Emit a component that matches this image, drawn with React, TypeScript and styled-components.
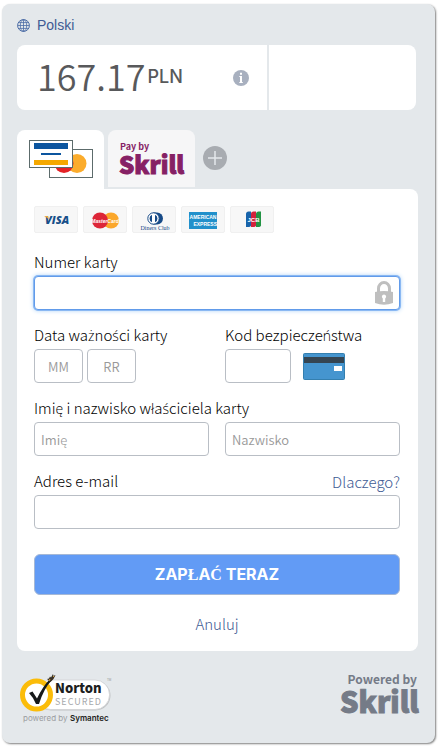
import React from "react";
import styled, { createGlobalStyle } from "styled-components";

const sans = '"Noto Sans CJK JP", "Noto Sans", sans-serif';

const GlobalStyle = createGlobalStyle`
  *, *::before, *::after { box-sizing: border-box; }
  body { margin: 0; background: #fff; font-family: ${sans}; color: #333; }
  button, input { font-family: inherit; }
  svg { display: block; overflow: visible; }
  a { color: #405b94; text-decoration: none; }
`;

const Panel = styled.main`
  margin: 4px 4px 4px 2px;
  padding: 12px 17px 19px 15px;
  background: #e4e8eb;
  border-radius: 8px;
  box-shadow: 1px 1px 2px rgba(0, 0, 0, 0.5);
`;

const LanguageLink = styled.a`
  display: flex;
  align-items: center;
  gap: 7px;
  height: 19px;
  font: 14px/19px "Liberation Sans", Arial, sans-serif;
`;

const AmountBar = styled.section`
  display: grid;
  grid-template-columns: 250px 1fr;
  gap: 2px;
  height: 65px;
  margin: 10px 2px 20px 0;
  border-radius: 8px;
  overflow: hidden;
`;

const AmountCell = styled.div`
  display: flex;
  align-items: center;
  justify-content: space-between;
  padding: 0 18px 0 20px;
  background: #fff;
`;

const Amount = styled.div`
  display: flex;
  align-items: center;
  padding-bottom: 6px;
  color: #58595b;
  font-size: 36px;
  font-weight: 350;
  line-height: 54px;
`;

const Currency = styled.span`
  margin: 4px 0 0 2px;
  font: 500 18px/20px Inter, sans-serif;
`;

const PlainButton = styled.button`
  display: block;
  padding: 0;
  border: 0;
  background: none;
  cursor: pointer;
`;

const Tabs = styled.div`
  display: flex;
  align-items: flex-start;
  gap: 4px;
  height: 59px;
`;

const Tab = styled.button<{ $active?: boolean }>`
  display: flex;
  justify-content: center;
  width: 87px;
  height: ${(p) => (p.$active ? 59 : 57)}px;
  padding: 10px 0 0;
  border: 0;
  border-radius: 8px 8px 0 0;
  background: ${(p) => (p.$active ? "#fff" : "#f6f6f7")};
  cursor: pointer;
`;

const AddTab = styled(PlainButton)`
  margin: 16px 0 0 4px;
`;

const Form = styled.form`
  padding: 17px 18px 15px 17px;
  background: #fff;
  border-radius: 0 8px 8px 8px;
`;

const Brands = styled.ul`
  display: flex;
  gap: 5px;
  margin: 0 0 17px;
  padding: 0;
  list-style: none;
`;

const Brand = styled.li`
  width: 44px;
  height: 27px;
  border: 1px solid #f0f0f0;
  border-radius: 2px;
  background: #f7f7f7;
`;

const Columns = styled.div`
  display: grid;
  grid-template-columns: 1fr 1fr;
  gap: 16px;
`;

const Field = styled.div`
  margin-bottom: 13px;
`;

const LabelRow = styled.div`
  display: flex;
  justify-content: space-between;
  height: 26px;
  font-size: 15px;
  line-height: 24px;
  white-space: nowrap;
`;

const Label = styled.label`
  font-weight: 300;
  color: #000;
`;

const AccentedLetter = styled.span`
  font-family: "Open Sans", "Noto Sans", sans-serif;
  font-size: 14px;
`;

const HelpLink = styled.a`
  font-weight: 300;
  line-height: 26px;
`;

const Inputs = styled.div`
  display: flex;
  align-items: center;
  gap: 4px;
`;

const TextInput = styled.input<{ $width?: number; $centered?: boolean; $highlighted?: boolean }>`
  display: block;
  width: ${(p) => (p.$width ? `${p.$width}px` : "100%")};
  min-width: 0;
  height: 34px;
  padding: 0 6px;
  border: 1px solid ${(p) => (p.$highlighted ? "#619bea" : "#b9bec5")};
  border-radius: 4px;
  outline: 0;
  background: #fff;
  box-shadow: ${(p) => (p.$highlighted ? "0 0 0 1px #8ab8f3, 0 0 5px #8fc3f5" : "none")};
  color: #333;
  font-size: 13px;
  font-weight: 350;
  text-align: ${(p) => (p.$centered ? "center" : "left")};
  &::placeholder { color: #999; opacity: 1; }
`;

const WithIcon = styled.div`
  position: relative;
  svg { position: absolute; right: 7px; top: 5px; pointer-events: none; }
`;

const CardBack = styled.svg`
  margin-left: 8px;
`;

const PayButton = styled.button`
  display: block;
  width: 100%;
  height: 41px;
  margin-top: 25px;
  padding: 0;
  border: 1px solid #a5b8d6;
  border-radius: 6px;
  background: #629bf5;
  color: #fff;
  font: 700 16px/20px Inter, sans-serif;
  cursor: pointer;
`;

const SerifLetter = styled.span`
  font-family: "Liberation Serif", serif;
`;

const Cancel = styled.a`
  display: block;
  margin-top: 17px;
  font-size: 15px;
  font-weight: 300;
  line-height: 24px;
  text-align: center;
`;

const Footer = styled.footer`
  display: flex;
  justify-content: space-between;
  align-items: flex-start;
  padding: 21px 0 0 3px;
`;

const Accented = ({ children }: { children: string }) => (
  <>
    {children.split(/([żśńćęł])/).map((part, i) =>
      i % 2 ? <AccentedLetter key={i}>{part}</AccentedLetter> : part
    )}
  </>
);

const Globe = () => (
  <svg width="13" height="13" viewBox="0 0 13 13" fill="none" stroke="#4b6ca6" aria-hidden="true">
    <circle cx="6.500" cy="6.500" r="5.900" strokeWidth="1" />
    <ellipse cx="6.500" cy="6.500" rx="3.200" ry="5.900" strokeWidth=".8" />
    <path d="M6.500 .6v11.800M.6 6.500h11.800M1.500 3.600h10M1.500 9.400h10" strokeWidth=".8" />
  </svg>
);

const InfoIcon = () => (
  <svg width="16" height="16" viewBox="0 0 16 16" aria-hidden="true">
    <circle cx="8" cy="8" r="8" fill="#a8b0bf" />
    <path d="M7 2.700h2v2H7zM6.300 6H9v6h.800v1H6.300v-1H7V7h-.700z" fill="#fff" />
  </svg>
);

const CardsIcon = () => (
  <svg width="64" height="40" viewBox="0 0 64 40" aria-hidden="true">
    <rect x="20.500" y="9.500" width="43" height="28" fill="#fff" stroke="#5c6b6b" />
    <circle cx="48" cy="23.500" r="9.500" fill="#fbac2c" />
    <circle cx="35" cy="23.500" r="9.500" fill="#e32227" />
    <rect x=".5" y=".5" width="43" height="27" fill="#fff" stroke="#5c6b6b" />
    <path d="M5 3h34v6H5zM12 13h20v2H12z" fill="#0b559f" />
    <path d="M5 20h34v5H5z" fill="#f5a800" />
  </svg>
);

const SkrillTabLogo = () => (
  <svg width="66" height="42" viewBox="0 0 66 42" role="img" aria-label="Pay by Skrill" fill="#862165">
    <text x="1" y="10" fontSize="9" fontWeight="700" fontFamily={sans}>Pay by</text>
    <text x="0" y="34" fontSize="24" fontWeight="900" fontFamily={sans} stroke="#862165" strokeWidth="1">Skrill</text>
  </svg>
);

const PlusIcon = () => (
  <svg width="24" height="24" viewBox="0 0 24 24" aria-hidden="true">
    <circle cx="12" cy="12" r="12" fill="#a8acb1" />
    <path d="M12 5v14M5 12h14" stroke="#e4e8eb" strokeWidth="1.500" />
  </svg>
);

const Visa = () => (
  <svg width="42" height="25" viewBox="0 0 42 25" role="img" aria-label="Visa">
    <text x="10" y="17" fontSize="11" fontWeight="800" fontStyle="italic" fontFamily="Open Sans" fill="#174f89">VISA</text>
    <path d="M9 9h4l1 4c-1-2-3-3-5-4" fill="#e9a63b" />
  </svg>
);

const MasterCard = () => (
  <svg width="42" height="25" viewBox="0 0 42 25" role="img" aria-label="MasterCard">
    <circle cx="27" cy="13.500" r="8" fill="#fba72a" />
    <circle cx="16" cy="13.500" r="8" fill="#dd2638" />
    <text x="21" y="15.500" fontSize="5" fontWeight="700" fontStyle="italic" textAnchor="middle" fontFamily="Liberation Sans" fill="#fff">MasterCard</text>
  </svg>
);

const Diners = () => (
  <svg width="42" height="25" viewBox="0 0 42 25" role="img" aria-label="Diners Club">
    <path d="M20 5.500h4a6 6 0 0 1 0 12h-4z" fill="#174a87" />
    <circle cx="20.500" cy="11.500" r="5.700" fill="#fff" stroke="#174a87" />
    <path d="M19 7.800a4 4 0 0 0 0 7.400zM22 7.800a4 4 0 0 1 0 7.400z" fill="#174a87" />
    <text x="22" y="23" fontSize="6" textAnchor="middle" fontFamily="Liberation Serif" fill="#174a87">Diners Club</text>
  </svg>
);

const Amex = () => (
  <svg width="42" height="25" viewBox="0 0 42 25" role="img" aria-label="American Express">
    <rect x="7" y="5" width="28" height="17" fill="#2190cb" />
    <g fontFamily="Liberation Sans" fontWeight="700" fontSize="5" fill="#fff">
      <text x="21" y="12" textAnchor="middle">AMERICAN</text>
      <text x="35" y="18.500" textAnchor="end">EXPRESS</text>
    </g>
  </svg>
);

const Jcb = () => (
  <svg width="42" height="25" viewBox="0 0 42 25" role="img" aria-label="JCB">
    <path d="M18 4.500h2v13a2 2 0 0 1-2 2.500h-3V7a2.500 2.500 0 0 1 3-2.500" fill="#1864ab" />
    <path d="M23 4.500h2v13a2 2 0 0 1-2 2.500h-3V7a2.500 2.500 0 0 1 3-2.500" fill="#d3213b" />
    <path d="M28 4.500h2v13a2 2 0 0 1-2 2.500h-3V7a2.500 2.500 0 0 1 3-2.500" fill="#229344" />
    <text x="22.500" y="14.500" fontSize="6" fontWeight="700" textAnchor="middle" fontFamily="Liberation Sans" fill="#fff">JCB</text>
  </svg>
);

const LockIcon = () => (
  <svg width="18" height="24" viewBox="0 0 18 24" aria-hidden="true">
    <path d="M3.500 11V7.500a5.500 6 0 0 1 11 0V11" fill="none" stroke="#bfbfbf" strokeWidth="3" />
    <path d="M0 11q9-2 18 0v11q-9 3.500-18 0z" fill="#bfbfbf" />
    <path d="M9 13.500a2.200 2.200 0 0 1 1.200 4V21H7.800v-3.500a2.200 2.200 0 0 1 1.200-4" fill="#fff" />
  </svg>
);

const CardBackIcon = () => (
  <CardBack width="42" height="27" viewBox="0 0 42 27" aria-hidden="true">
    <rect x=".5" y=".5" width="41" height="26" rx="1" fill="#4595cf" stroke="#347faf" />
    <path d="M1 4h40v6H1z" fill="#354552" />
    <path d="M31 13h8v5h-8z" fill="#fff" />
  </CardBack>
);

const NortonLogo = () => (
  <svg width="93" height="52" viewBox="0 0 93 52" role="img" aria-label="Norton Secured, powered by Symantec">
    <rect x="16" y="8.500" width="74.500" height="30" rx="15" fill="#bfc2c4" />
    <rect x="16" y="8" width="73.500" height="29.500" rx="14.500" fill="#fff" stroke="#d0d2d4" strokeWidth=".8" />
    <circle cx="16.500" cy="23" r="14" fill="#fff" stroke="#fbbc09" strokeWidth="5" />
    <path d="M9 21l3.500-1.500 4.500 7Q23 14 30 7l4.500-3.500L32 8q-8 8-13 24h-3q-3-7-7-11" fill="#17191a" />
    <path d="M27 7l2-.5 1-2 1 1 2-3.500.5 2 2-1-2 4-3 3z" fill="#3a3226" />
    <path d="M29 9l1-2m3-2 1-1" stroke="#d9a13a" />
    <text x="35" y="21" fontSize="13" fontWeight="900" fontFamily={sans} fill="#1d1e20">Norton</text>
    <text x="35" y="33" fontSize="9" letterSpacing="1" fontFamily={sans} fill="#a7a9ac">SECURED</text>
    <text x="87" y="9" fontSize="3" fontFamily="Liberation Sans" fill="#999">TM</text>
    <g fontFamily="Inter" fontSize="8">
      <text x="3" y="49" fill="#9b9da0">powered by</text>
      <text x="50" y="49" fontWeight="600" fill="#1d1e20">Symantec</text>
    </g>
  </svg>
);

const PoweredLogo = () => (
  <svg width="78" height="46" viewBox="0 0 78 46" role="img" aria-label="Powered by Skrill" fill="#757b87">
    <text x="77" y="12" textAnchor="end" fontSize="12" fontWeight="700" fontFamily={sans}>Powered by</text>
    <text x="0" y="41" fontSize="29" fontWeight="900" fontFamily={sans} stroke="#757b87" strokeWidth="1">Skrill</text>
  </svg>
);

const brands = [Visa, MasterCard, Diners, Amex, Jcb];

export default function App() {
  return (
    <>
      <GlobalStyle />
      <Panel lang="pl">
        <LanguageLink href="#language"><Globe />Polski</LanguageLink>
        <AmountBar>
          <AmountCell>
            <Amount>167.17<Currency>PLN</Currency></Amount>
            <PlainButton type="button" aria-label="Informacje"><InfoIcon /></PlainButton>
          </AmountCell>
          <AmountCell />
        </AmountBar>
        <Tabs>
          <Tab type="button" $active aria-label="Karta"><CardsIcon /></Tab>
          <Tab type="button"><SkrillTabLogo /></Tab>
          <AddTab type="button" aria-label="Więcej metod"><PlusIcon /></AddTab>
        </Tabs>
        <Form onSubmit={(e) => e.preventDefault()}>
          <Brands>
            {brands.map((Logo, i) => <Brand key={i}><Logo /></Brand>)}
          </Brands>
          <Field>
            <LabelRow><Label htmlFor="number">Numer karty</Label></LabelRow>
            <WithIcon>
              <TextInput id="number" inputMode="numeric" $highlighted />
              <LockIcon />
            </WithIcon>
          </Field>
          <Columns>
            <Field>
              <LabelRow><Label htmlFor="month"><Accented>Data ważności karty</Accented></Label></LabelRow>
              <Inputs>
                <TextInput id="month" placeholder="MM" $width={49} $centered />
                <TextInput aria-label="Rok" placeholder="RR" $width={49} $centered />
              </Inputs>
            </Field>
            <Field>
              <LabelRow><Label htmlFor="code"><Accented>Kod bezpieczeństwa</Accented></Label></LabelRow>
              <Inputs>
                <TextInput id="code" $width={66} />
                <CardBackIcon />
              </Inputs>
            </Field>
          </Columns>
          <Field>
            <LabelRow><Label htmlFor="first"><Accented>Imię i nazwisko właściciela karty</Accented></Label></LabelRow>
            <Columns>
              <TextInput id="first" placeholder="Imię" />
              <TextInput aria-label="Nazwisko" placeholder="Nazwisko" />
            </Columns>
          </Field>
          <Field>
            <LabelRow>
              <Label htmlFor="email">Adres e-mail</Label>
              <HelpLink href="#why">Dlaczego?</HelpLink>
            </LabelRow>
            <TextInput id="email" type="email" />
          </Field>
          <PayButton type="submit">
            ZAP<SerifLetter>Ł</SerifLetter>A<SerifLetter>Ć</SerifLetter> TERAZ
          </PayButton>
          <Cancel href="#cancel">Anuluj</Cancel>
        </Form>
        <Footer>
          <NortonLogo />
          <PoweredLogo />
        </Footer>
      </Panel>
    </>
  );
}
